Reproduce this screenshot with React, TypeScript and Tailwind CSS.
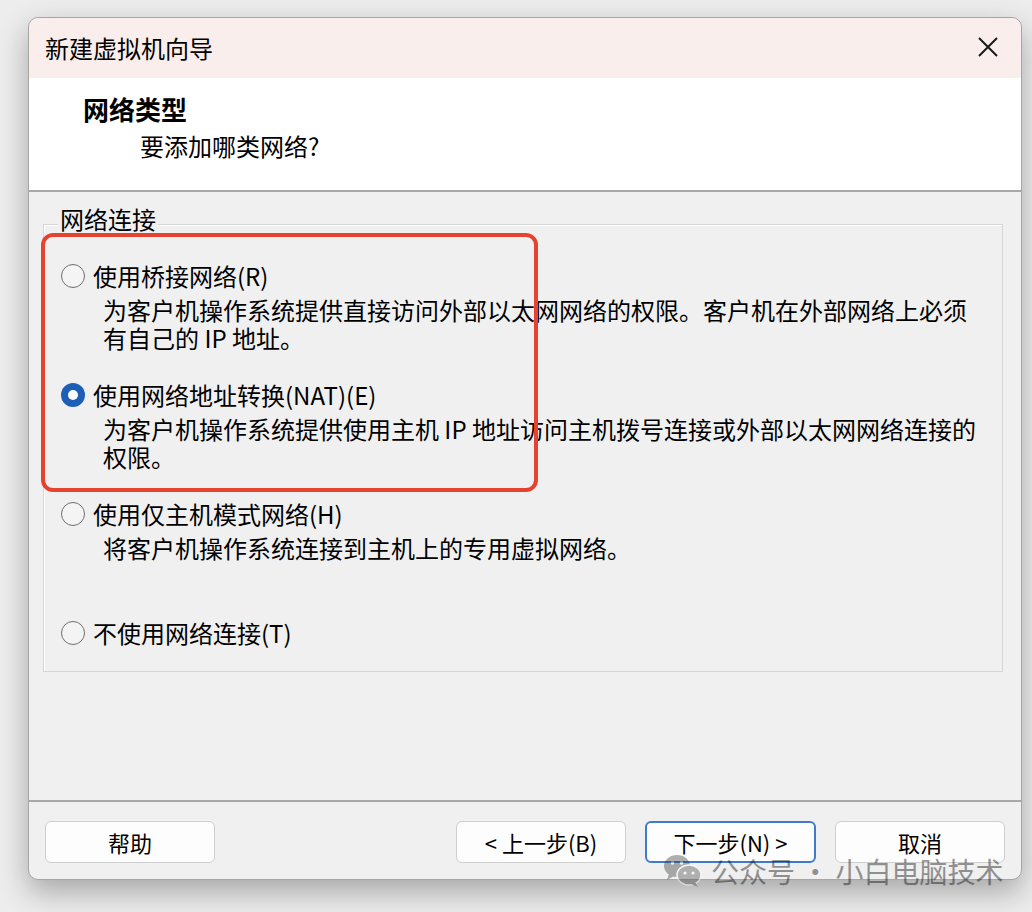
import React from 'react';

const font = "font-['Noto_Sans_CJK_SC','Noto_Sans',sans-serif]";

function Radio({ checked }: { checked?: boolean }) {
  if (checked) {
    return (
      <span className="flex h-[24px] w-[24px] shrink-0 items-center justify-center rounded-full bg-[#1d5eb6]">
        <span className="h-[10px] w-[10px] rounded-full bg-white" />
      </span>
    );
  }
  return <span className="h-[24px] w-[24px] shrink-0 rounded-full border-[1.5px] border-[#6e6e6e] bg-[#f4f4f4]" />;
}

function Option({ label, desc, checked, lines }: { label: string; desc?: string[]; checked?: boolean; lines?: number }) {
  const rows = desc ?? [];
  const pad = (lines ?? rows.length) - rows.length;
  return (
    <div className="flex flex-col">
      <div className="flex items-center gap-[8px] leading-[28px]">
        <Radio checked={checked} />
        <span>{label}</span>
      </div>
      {rows.length > 0 && (
        <div className="mt-[6px] pl-[42px] leading-[28px]">
          {rows.map((r, i) => (
            <div key={i}>{r}</div>
          ))}
          {Array.from({ length: pad }).map((_, i) => (
            <div key={'p' + i} className="h-[28px]" />
          ))}
        </div>
      )}
    </div>
  );
}

function Button({ children, primary }: { children: React.ReactNode; primary?: boolean }) {
  return (
    <button
      className={
        primary
          ? 'h-[42px] w-[171px] rounded-[6px] border-2 border-[#3f7bc9] bg-[#fdfdfd] text-[22px] leading-none text-black'
          : 'h-[42px] w-[170px] rounded-[6px] border border-[#cfcfcf] bg-[#fdfdfd] text-[22px] leading-none text-black'
      }
    >
      {children}
    </button>
  );
}

function WeChatMark() {
  return (
    <svg width="40" height="34" viewBox="0 0 40 34" fill="none">
      <ellipse cx="14" cy="12" rx="13" ry="11" fill="#3a3a3a" />
      <path d="M6 20 L4 26 L11 22 Z" fill="#3a3a3a" />
      <circle cx="9.5" cy="9" r="1.8" fill="#ffffff" />
      <circle cx="18.5" cy="9" r="1.8" fill="#ffffff" />
      <ellipse cx="26" cy="21" rx="12" ry="10" fill="#505050" stroke="#ffffff" strokeWidth="1.5" />
      <path d="M32 28 L35 33 L28 30 Z" fill="#505050" />
      <circle cx="22" cy="19" r="1.6" fill="#ffffff" />
      <circle cx="30" cy="19" r="1.6" fill="#ffffff" />
    </svg>
  );
}

export default function App() {
  return (
    <div className={`${font} h-[912px] w-[1032px] overflow-hidden bg-[#ededed] pl-[28px] pt-[17px] text-black`}>
      <div className="relative flex h-[863px] w-[994px] flex-col rounded-[10px] border border-[#a6a6a6] bg-[#f0f0f0] shadow-[0_12px_30px_rgba(0,0,0,0.3)]">
        {/* title bar */}
        <div className="flex h-[60px] items-center justify-between rounded-t-[10px] bg-[#f9eeec] pl-[16px] pr-[22px]">
          <span className="text-[24px] leading-none">新建虚拟机向导</span>
          <svg width="22" height="22" viewBox="0 0 22 22" className="mt-[-2px]">
            <path d="M2 2 L20 20 M20 2 L2 20" stroke="#1a1a1a" strokeWidth="2" />
          </svg>
        </div>

        {/* header */}
        <div className="h-[114px] border-b-2 border-[#a8a8a8] bg-white pl-[54px] pt-[16px]">
          <div className="text-[26px] font-bold leading-[30px]">网络类型</div>
          <div className="mt-[8px] pl-[57px] text-[24px] leading-[28px]">要添加哪类网络?</div>
        </div>

        {/* body */}
        <div className="h-[610px] border-b-2 border-[#a8a8a8] px-[18px] pt-[32px] pl-[14px]">
          <div className="relative flex flex-col gap-[29px] border border-[#d6d6d6] pb-[24px] pl-[17px] pr-[16px] pt-[37px] text-[24px] shadow-[inset_1px_1px_0_#ffffff]">
            <span className="absolute left-[14px] top-[-20px] bg-[#f0f0f0] px-[2px] leading-[28px]">网络连接</span>
            <Option
              label="使用桥接网络(R)"
              desc={['为客户机操作系统提供直接访问外部以太网网络的权限。客户机在外部网络上必须', '有自己的 IP 地址。']}
            />
            <Option
              checked
              label="使用网络地址转换(NAT)(E)"
              desc={['为客户机操作系统提供使用主机 IP 地址访问主机拨号连接或外部以太网网络连接的', '权限。']}
            />
            <Option label="使用仅主机模式网络(H)" desc={['将客户机操作系统连接到主机上的专用虚拟网络。']} lines={2} />
            <Option label="不使用网络连接(T)" />
          </div>
        </div>

        {/* footer */}
        <div className="flex flex-1 items-start justify-between rounded-b-[10px] px-[16px] pt-[19px]">
          <Button>帮助</Button>
          <div className="flex gap-[19px]">
            <Button>&lt; 上一步(B)</Button>
            <Button primary>下一步(N) &gt;</Button>
            <Button>取消</Button>
          </div>
        </div>

        {/* annotation */}
        <div className="pointer-events-none absolute left-[12px] top-[215px] h-[259px] w-[497px] rounded-[12px] border-4 border-[#e5432f]" />

        {/* watermark */}
        <div className="pointer-events-none absolute left-[634px] top-[836px] z-10 flex items-center gap-[8px] text-[28px] leading-[34px] text-black opacity-40">
          <WeChatMark />
          <span>公众号 · 小白电脑技术</span>
        </div>
      </div>
    </div>
  );
}
